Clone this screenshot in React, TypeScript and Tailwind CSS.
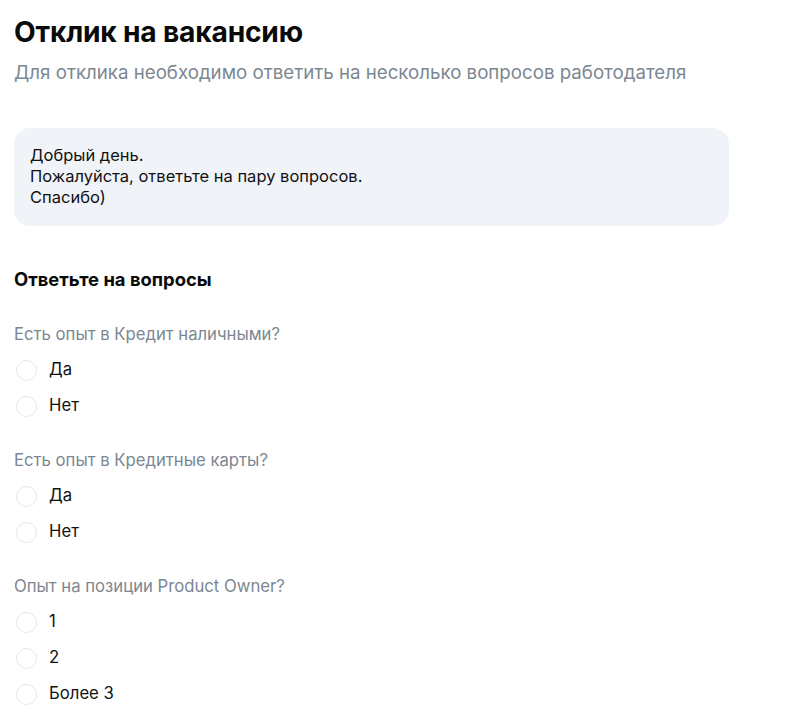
import React from "react";

const questions = [
  { title: "Есть опыт в Кредит наличными?", options: ["Да", "Нет"] },
  { title: "Есть опыт в Кредитные карты?", options: ["Да", "Нет"] },
  { title: "Опыт на позиции Product Owner?", options: ["1", "2", "Более 3"] },
];

function Radio({ label }: { label: string }) {
  return (
    <label className="flex items-center h-[36px] cursor-pointer">
      <span className="w-[21px] h-[21px] rounded-full border border-[#e3e6ea] bg-white ml-[2px] shrink-0" />
      <span className="ml-[12px] text-[16.7px] text-[#111111]">{label}</span>
    </label>
  );
}

export default function App() {
  return (
    <div className="bg-white min-h-[726px] px-[14px] pt-[15px] font-['Inter',sans-serif]">
      <h1 className="text-[28.2px] font-bold leading-[34px] text-[#0a0a0a] tracking-[-0.2px]">
        Отклик на вакансию
      </h1>
      <p className="mt-[12px] text-[18.7px] leading-[24px] text-[#7c8791]">
        Для отклика необходимо ответить на несколько вопросов работодателя
      </p>

      <div className="mt-[43px] w-[715px] rounded-[16px] bg-[#f0f3f8] px-[16px] pt-[17px] pb-[18px] text-[16.5px] leading-[21px] text-[#111111]">
        <p>Добрый день.</p>
        <p>Пожалуйста, ответьте на пару вопросов.</p>
        <p>Спасибо)</p>
      </div>

      <h2 className="mt-[41px] text-[18.4px] font-bold leading-[24px] text-[#0a0a0a]">
        Ответьте на вопросы
      </h2>

      <div className="mt-[32px] flex flex-col gap-[25px]">
        {questions.map((q) => (
          <div key={q.title}>
            <p className="text-[16.7px] leading-[22px] text-[#7c8791] mb-[7px]">{q.title}</p>
            <div className="flex flex-col">
              {q.options.map((o) => (
                <Radio key={o} label={o} />
              ))}
            </div>
          </div>
        ))}
      </div>
    </div>
  );
}
